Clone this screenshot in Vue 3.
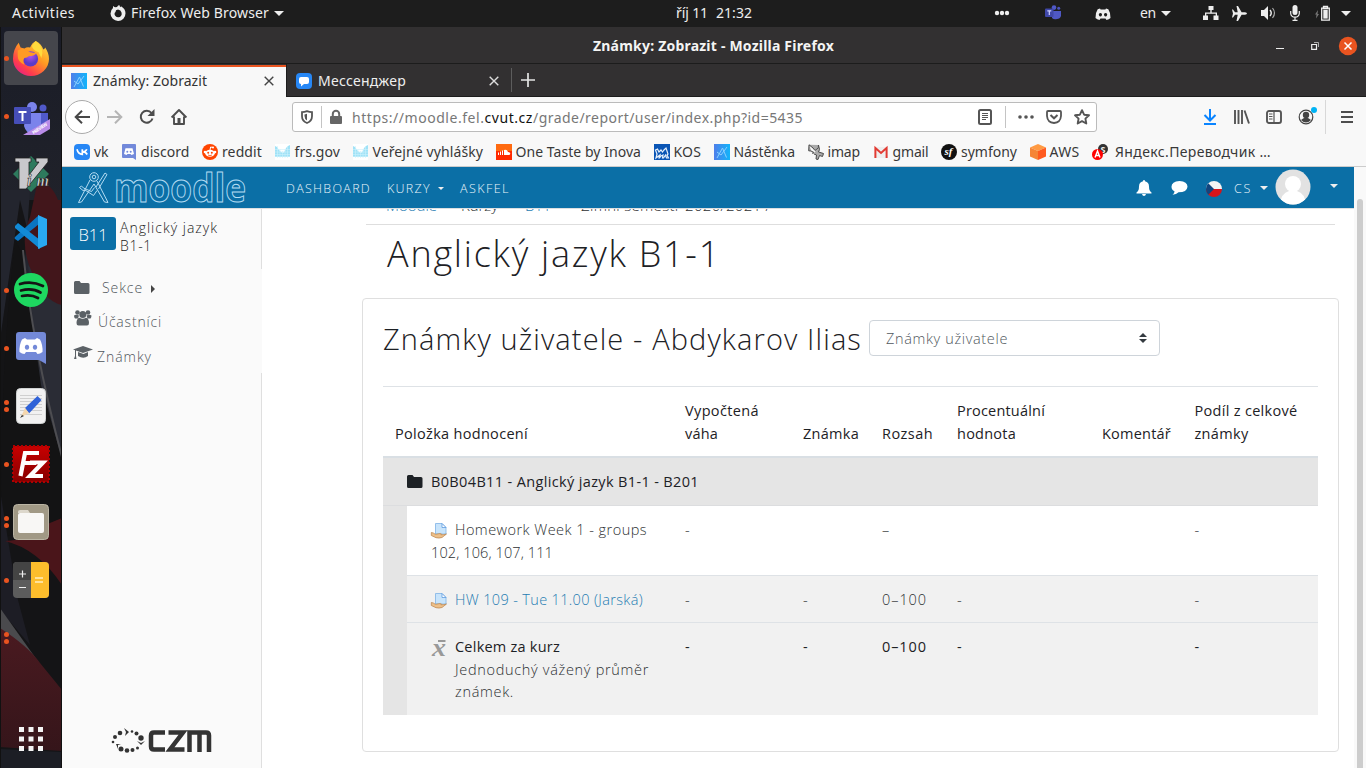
<script setup>
// Spreads letters so a label takes a known advance width.
const vFit = {
  mounted(el, { value }) {
    const count = el.textContent.length
    const natural = el.getBoundingClientRect().width
    el.style.letterSpacing = (value - natural) / count + 'px'
  }
}

const bookmarks = [
  { icon: 'vk', label: 'vk', w: 14.5 },
  { icon: 'discord', label: 'discord', w: 48.5 },
  { icon: 'reddit', label: 'reddit', w: 40 },
  { icon: 'gov', label: 'frs.gov', w: 45.5 },
  { icon: 'gov', label: 'Veřejné vyhlášky', w: 110.5 },
  { icon: 'cloud', label: 'One Taste by Inova', w: 125.5 },
  { icon: 'kos', label: 'KOS', w: 27.5 },
  { icon: 'moodle', label: 'Nástěnka', w: 61.5 },
  { icon: 'imap', label: 'imap', w: 32.5 },
  { icon: 'gmail', label: 'gmail', w: 36 },
  { icon: 'symfony', label: 'symfony', w: 56 },
  { icon: 'aws', label: 'AWS', w: 30 },
  { icon: 'yandex', label: 'Яндекс.Переводчик …', w: 156 }
]

const dock = [
  { name: 'firefox', dots: 1, active: true },
  { name: 'teams', dots: 1 },
  { name: 'vim', dots: 0 },
  { name: 'code', dots: 0 },
  { name: 'spotify', dots: 1 },
  { name: 'discord', dots: 1 },
  { name: 'editor', dots: 2 },
  { name: 'filezilla', dots: 1 },
  { name: 'files', dots: 2 },
  { name: 'calc', dots: 1 },
  { name: 'none', dots: 2 }
]
</script>

<template>
  <div class="desktop">
    <header class="topbar">
      <span class="activities" v-fit="63">Activities</span>
      <svg class="ff-mini" width="16" height="16" viewBox="0 0 16 16"><path fill="#eee" fill-rule="evenodd" d="M3 3q-.2-1 .3-2 1 1.200 2.200 1.300L7 2q.8-1.500 2.300-2 .2 1.500 1.400 2.300l.3-1q4.500 2.500 4.500 7A7.500 7.500 0 0 1 .5 8.500Q.5 5 3 3zM8 4.600 6 5.200 5.500 7 4.600 8A3.600 3.600 0 1 0 11.500 7.500Q11 5 8 4.600z"/></svg>
      <span v-fit="138">Firefox Web Browser</span>
      <i class="caret c1"></i>
      <span class="clock"><span v-fit="32">říj 11</span><span v-fit="36">21:32</span></span>
      <div class="tray">
        <svg width="16" height="6" class="t-dots"><g fill="#eee"><circle cx="3" cy="3" r="2.200"/><circle cx="8" cy="3" r="2.200"/><circle cx="13" cy="3" r="2.200"/></g></svg>
        <svg width="16" height="16" viewBox="0 0 16 16" class="t-teams"><circle cx="9" cy="2.6" r="2.3" fill="#5059c9"/><circle cx="13.7" cy="3.3" r="1.5" fill="#4b53bc"/><path d="M7 6h9v5q-1 3-4 3-3 1-5-1z" fill="#4f58c5"/><rect y="3.5" width="8.5" height="8.5" rx="1" fill="#4048a9"/><path d="M2.3 5.8h4M4.3 6v4" stroke="#cdd0ff" stroke-width="1.2"/></svg>
        <svg width="16" height="12" viewBox="0 0 16 12" class="t-disc"><path fill="#eee" fill-rule="evenodd" d="M5 .5 2.7 1.3Q.2 5 .5 10q1.500 1.500 4 2l1-1.500h5l1 1.500q2.500-.5 4-2 .3-5-2.200-8.700L11 .5l-.6 1H5.600zM5.400 5a1.600 1.700 0 1 0 .01 0zM10.600 5a1.600 1.700 0 1 0 .01 0z"/></svg>
        <span class="t-en" v-fit="16">en</span><i class="caret c2"></i>
        <svg width="16" height="14" viewBox="0 0 16 14" class="t-net"><path d="M5.500 0h5v4h-5zM0 9.500h5V14H0zM10.500 9.500h5V14h-5zM7.300 4h1.400v3H7.300zM2 6.500h12v3.200h-1.300V7.800H3.300v1.900H2z" fill="#eee"/></svg>
        <svg width="15" height="15" viewBox="0 0 15 15" class="t-plane"><path d="M1 3.500l2 2.700h2.700L4.500 0H6l3.600 6.300H13q2 .2 2 1.200t-2 1.200H9.600L6 15H4.500l1.200-6.200H3l-2 2.700H0l1-4-1-4z" fill="#eee"/></svg>
        <svg width="15" height="14" viewBox="0 0 15 14" class="t-vol"><path d="M0 4h3l4-4v14L3 10H0z" fill="#eee"/><path d="M9 4q2.500 3 0 6" stroke="#eee" fill="none" stroke-width="1.400"/><path d="M11.500 2q4 5 0 10" stroke="#aaa" fill="none" stroke-width="1.200"/></svg>
        <svg width="10" height="16" viewBox="0 0 10 16" class="t-mic"><rect x="2.500" width="5" height="10" rx="2.500" fill="#eee"/><path d="M.7 6v2.500q.3 3.500 4.300 3.700 4-.2 4.300-3.700V6M5 12v3.500M2.500 15.300h5" stroke="#eee" stroke-width="1.200" fill="none"/></svg>
        <svg width="15" height="15" viewBox="0 0 15 15" class="t-bat"><path d="M3 4 0 8.500h1.500l-.5 4L4 8H2.500z" fill="#777"/><path d="M6.700 2.200h7.600v12H6.700zM8.500.5h4v2h-4z" stroke="#eee" fill="none" stroke-width="1.300"/><path d="M8.300 3.800h4.400v8.800H8.300z" fill="#eee"/></svg>
        <i class="caret c3"></i>
      </div>
    </header>

    <div class="work">
      <aside class="dock">
        <svg class="wall" width="62" height="741" viewBox="0 27 62 741">
          <defs><linearGradient id="wr" x2="0" y2="1"><stop stop-color="#4a1a20"/><stop offset="1" stop-color="#35151a"/></linearGradient>
          <linearGradient id="wk" x2="0" y2="1"><stop stop-color="#1a1c27"/><stop offset="1" stop-color="#20222a"/></linearGradient></defs>
          <path fill="#141416" d="M0 27h62v741H0z"/><path fill="url(#wk)" d="M0 27h62v173H0z"/>
          <path fill="#23252e" d="M0 190h30l-6 85 14 115 24 60V300L40 280 20 200l-10 70-10 70z"/>
          <path fill="#2a2c35" d="M28 265l34 40v155l-24-78z"/>
          <path fill="#131314" d="M15 240l8 15 18 130 21 74v60L2 538q-4-150 13-298z"/>
          <path fill="#42161b" d="M38 180q14 4 20 20h4v105q-20-4-33-40-9-26 1-48z"/>
          <path d="M23 250q8 90 39 207" stroke="#4d4d51" stroke-width="2" fill="none"/>
          <path fill="#1d1d25" d="M0 490l8 50 10 60 12 45L0 610z"/>
          <path fill="#4a151a" d="M5 541q25-1 40-16l17-7v67q-24-36-57-44z"/>
          <path fill="#4a4a4d" d="M0 608l32 45 12 17L0 632z"/>
          <path fill="url(#wr)" d="M0 628q28 18 40 35l22 27v61l-62-4z"/>
          <path fill="#1c1e25" d="M0 749l62 3v16H0z"/>
          <path d="M.5 27v741M61.500 27v741" stroke="#111"/>
        </svg>
        <div v-for="d in dock" :key="d.name" class="slot" :class="{ active: d.active }">
          <div class="dots"><b v-for="n in d.dots" :key="n"></b></div>
          <svg v-if="d.name === 'firefox'" width="36" height="38" viewBox="0 0 38 38">
            <defs><linearGradient id="fa" x1="1" x2=".2" y2="1"><stop stop-color="#ffe84b"/><stop offset=".45" stop-color="#ff9a22"/><stop offset=".8" stop-color="#ff3b4d"/><stop offset="1" stop-color="#e0218a"/></linearGradient><radialGradient id="fb" cy=".3"><stop stop-color="#b552e8"/><stop offset="1" stop-color="#5b3bc8"/></radialGradient></defs>
            <path fill="url(#fa)" d="M24 1q6 3 8 9 2-1 2-2 4 6 4 12A19 18 0 0 1 0 20Q0 10 6 3l2 5 4 1q3-2 6-1 2-5 6-7z"/>
            <circle cx="18.500" cy="20" r="8" fill="url(#fb)"/>
            <path d="M5 11q5-3 8-1l5 3 7 1q-3 3-8 3-2 2-5 2-2 3 0 7-7-3-7-9z" fill="#ff9a25"/><path d="M24 1q10 8 6 18l-3-6q-7-3-7-7z" fill="#ffdb3d"/>
          </svg>
          <svg v-else-if="d.name === 'teams'" class="teams" width="38" height="36" viewBox="0 0 38 36"><circle cx="18" cy="6" r="5" fill="#7b83eb"/><circle cx="29" cy="7" r="3.500" fill="#5059c9"/><path d="M23 12h11v10q-2 7-8 6z" fill="#5059c9"/><path d="M12 12h15v12q-2 9-9 9-6-1-8-8z" fill="#7b83eb"/><rect x="0" y="6" width="17" height="17" rx="1" fill="#464eb8"/><path d="M4.500 11h8M8.500 11v9" stroke="#fff" stroke-width="2"/><path d="M9 34 36 18v10L26 34z" fill="#b98ce8"/><text transform="translate(19.500 33.500) rotate(-34)" fill="#fff" font-size="4.500" textLength="17" font-family="Open Sans" font-weight="700">PREVIEW</text></svg>
          <svg v-else-if="d.name === 'vim'" width="38" height="38" viewBox="0 0 38 38"><path d="M19 1l18 18-18 18L1 19z" fill="#2d7a5d"/><path d="M3 3h16v4h-2v13L27 7h-3V3h12v4L14 34H7V7H3z" fill="#c9c9cc" stroke="#222" stroke-width=".8"/><text x="15" y="31" font-family="Liberation Serif" font-style="italic" font-weight="700" font-size="16" textLength="22" fill="#ddd" stroke="#222" stroke-width=".6">im</text></svg>
          <svg v-else-if="d.name === 'code'" width="36" height="36" viewBox="0 0 36 36"><path d="M26 1v9L5 27l-3-2q-1-1 0-2z" fill="#0a75c2"/><path d="M2 12l3-3 22 17v9L2 14z" fill="#128ad6"/><path d="M25 1l9 4v26l-9 4z" fill="#29a9f2"/></svg>
          <svg v-else-if="d.name === 'spotify'" width="34" height="34" viewBox="0 0 34 34"><circle cx="17" cy="17" r="17" fill="#1ed760"/><path d="M6 11q12-3.500 23 2M7 17.500q11-3 19.500 2M8 23q9-2 16 2" stroke="#141414" stroke-width="2.700" stroke-linecap="round" fill="none"/></svg>
          <svg v-else-if="d.name === 'discord'" width="30" height="32" viewBox="0 0 30 32"><path d="M3 0h24q3 0 3 3v29l-7-4H3q-3 0-3-3V3q0-3 3-3z" fill="#7389d8"/><path fill="#fff" fill-rule="evenodd" d="M9 6 6 7.500Q3 13 3.500 20q2.500 2 5 2l1.500-2h10l1.500 2q2.500 0 5-2 .5-7-2.500-12.500L21 6l-2 1.500h-8zM11 12.700a2.200 2.500 0 1 0 .01 0zM19 12.700a2.200 2.500 0 1 0 .01 0z"/></svg>
          <svg v-else-if="d.name === 'editor'" width="30" height="36" viewBox="0 0 30 36"><rect x=".5" y=".5" width="29" height="35" rx="4" fill="#f1f1f1" stroke="#cfd2d2"/><path d="M4 7.500h22M4 10.500h22M4 13.500h22M4 16.500h22M4 19.500h22M4 22.500h22M4 26.500h22" stroke="#cfcfcf"/><path d="M9 20 21.500 8l4 4L13 25.500z" fill="#2f62d8"/><path d="M9 20l4 5-8 4z" fill="#f3d6ae"/><path d="M6 27l2 1-4 2z" fill="#333"/></svg>
          <svg v-else-if="d.name === 'filezilla'" width="38" height="38" viewBox="0 0 38 38"><defs><linearGradient id="fz" x2="0" y2="1"><stop stop-color="#c80000"/><stop offset="1" stop-color="#860000"/></linearGradient></defs><rect x="1" y="1" width="36" height="36" fill="url(#fz)" stroke="#b00000" stroke-width="2" stroke-dasharray="2 2"/><path d="M8.500 31 13 8h14M12 18h12M18 17.500h13L18 31h13" stroke="#fff" stroke-width="4.200" fill="none"/></svg>
          <svg v-else-if="d.name === 'files'" width="36" height="36" viewBox="0 0 36 36"><rect x=".5" y=".5" width="35" height="35" rx="4" fill="#a19985" stroke="#bbb5a4"/><path d="M5 8q0-2 2-2h8l2 3H5z" fill="#ddd8cc"/><rect x="5" y="9" width="26" height="20" rx="2" fill="#f8f7f5"/></svg>
          <svg v-else-if="d.name === 'calc'" width="36" height="36" viewBox="0 0 36 36"><rect width="36" height="36" rx="4" fill="#5c5c5c"/><path d="M0 18V4q0-4 4-4h14v18z" fill="#444"/><path d="M18 0h14q4 0 4 4v28q0 4-4 4H18z" fill="#fdbd2c"/><path d="M6 12h7M9.500 8.500v7M6 25.500h7" stroke="#eee" stroke-width="1.200"/><path d="M22 16h8M22 20h8" stroke="#ffe29a" stroke-width="2"/></svg>
        </div>
        <svg class="apps" width="24" height="24" viewBox="0 0 24 24"><path fill="#f4f4f4" d="M0 0h5v5H0zM9.500 0h5v5h-5zM19 0h5v5h-5zM0 9.500h5v5H0zM9.500 9.500h5v5h-5zM19 9.500h5v5h-5zM0 19h5v5H0zM9.500 19h5v5h-5zM19 19h5v5h-5z"/></svg>
      </aside>

      <section class="window">
        <div class="titlebar">
          <span class="title" v-fit="241">Známky: Zobrazit - Mozilla Firefox</span>
          <div class="winbtns">
            <svg width="8" height="6"><path d="M0 5.500h8" stroke="#eee"/></svg>
            <svg width="8" height="8"><path d="M.7 2.500h4.800v4.800H.7z" fill="none" stroke="#eee" stroke-width="1.200"/><path d="M3 .5h4.500V5" fill="none" stroke="#aaa"/></svg>
            <svg width="18" height="18"><circle cx="9" cy="9" r="9.200" fill="#e95420"/><path d="M5.500 5.500l7 7m0-7-7 7" stroke="#fff" stroke-width="1.500"/></svg>
          </div>
        </div>

        <div class="tabs">
          <div class="tab current">
            <svg width="16" height="16"><defs><linearGradient id="mg"><stop stop-color="#4f7fea"/><stop offset="1" stop-color="#12b4fa"/></linearGradient></defs><path fill="url(#mg)" d="M0 0h16v16H0z"/><path d="M3 14 8.500 4l4 9.500M3 8l4 3 6-8" stroke="#8ad0ff" fill="none"/></svg>
            <span v-fit="114">Známky: Zobrazit</span>
            <svg class="x" width="10" height="10"><path d="M.7.7l8.600 8.600m0-8.600L.7 9.300" stroke="#444" stroke-width="1.400"/></svg>
          </div>
          <div class="tab">
            <svg width="16" height="16"><rect width="16" height="16" rx="4" fill="#2787f5"/><path d="M5 4h6q2 0 2 2v3q0 2-2 2H8l-3 2.500V11q-2 0-2-2V6q0-2 2-2z" fill="#fff"/></svg>
            <span v-fit="88">Мессенджер</span>
            <svg class="x" width="10" height="10"><path d="M.7.7l8.600 8.600m0-8.600L.7 9.300" stroke="#ddd" stroke-width="1.400"/></svg>
          </div>
          <i class="tabsep"></i>
          <svg class="plus" width="14" height="14"><path d="M7 0v14M0 7h14" stroke="#e4e4e4" stroke-width="1.700"/></svg>
        </div>

        <div class="nav">
          <div class="back"><svg width="16" height="14"><path d="M16 7H1.500M8 .8 1.700 7 8 13.200" stroke="#484848" stroke-width="2" fill="none"/></svg></div>
          <svg class="fwd" width="16" height="14"><path d="M0 7h14.500M8 .8 14.300 7 8 13.200" stroke="#b5b5b5" stroke-width="2" fill="none"/></svg>
          <svg class="reload" width="16" height="16"><path d="M13.500 9.500a6 6 0 1 1-1-5.500" stroke="#4d4d4d" stroke-width="2" fill="none"/><path d="M15.500 0v7H8.500z" fill="#4d4d4d"/></svg>
          <svg class="home" width="16" height="16"><path d="M.6 8.500 8 1l7.400 7.500M3 7.500V15h10V7.500" stroke="#4d4d4d" stroke-width="1.900" fill="none" stroke-linejoin="round"/><path d="M6.500 9h3v5.500h-3z" fill="#4d4d4d"/></svg>
          <div class="url">
            <svg width="12" height="14" class="shield"><path d="M6 1.200q2.500 1 5 1v4Q11 11 6 13 1 11 1 6.200v-4q2.500 0 5-1z" fill="none" stroke="#555" stroke-width="1.800"/><path d="M6 3.800v6.700Q3.500 9 3.500 6V4.500z" fill="#555"/></svg>
            <i class="vsep v1"></i>
            <svg width="12" height="14" class="lock"><rect y="6" width="12" height="8" rx="1" fill="#666"/><path d="M2.800 7V4a3.200 3.200 0 0 1 6.400 0v3" stroke="#666" stroke-width="2" fill="none"/></svg>
            <span class="addr"><span v-fit="132.500">https://moodle.fel.</span><b v-fit="48.500">cvut.cz</b><span v-fit="270">/grade/report/user/index.php?id=5435</span></span>
            <svg width="14" height="16" class="reader"><rect x="1" y="1" width="12" height="14" rx="1.500" fill="none" stroke="#555" stroke-width="2"/><path d="M4 4.500h6M4 6.500h6M4 8.500h6M4 10.500h4" stroke="#555"/></svg>
            <i class="vsep v2"></i>
            <svg width="16" height="4" class="more"><g fill="#555"><circle cx="2" cy="2" r="1.800"/><circle cx="8" cy="2" r="1.800"/><circle cx="14" cy="2" r="1.800"/></g></svg>
            <svg width="16" height="14" class="pocket"><path d="M2 1h12q1 0 1 1v4q-.5 6.500-7 7-6.500-.5-7-7V2q0-1 1-1z" fill="none" stroke="#555" stroke-width="1.800"/><path d="M4.500 5 8 8.300 11.500 5" stroke="#555" stroke-width="2" fill="none"/></svg>
            <svg width="16" height="16" class="star"><path d="M8 1.200l2.100 4.500 4.900.6-3.600 3.300.9 4.900L8 12.100l-4.300 2.400.9-4.900L1 6.300l4.900-.6z" fill="none" stroke="#555" stroke-width="1.900" stroke-linejoin="round"/></svg>
          </div>
          <svg width="14" height="16" class="down"><path d="M7 0v11M1.500 6 7 11.500 12.500 6M1 15h12" stroke="#0a84ff" stroke-width="2" fill="none"/></svg>
          <svg width="16" height="14" class="lib"><path d="M1 0v14M4.500 0v14M8 0v14M10.500.5l4.500 13" stroke="#555" stroke-width="1.900" fill="none"/></svg>
          <svg width="16" height="14" class="side"><rect x="1" y="1" width="14" height="12" rx="2" fill="none" stroke="#555" stroke-width="1.900"/><path d="M8 1v12M3 4h3.500M3 6.500h3.500M3 9h3.500" stroke="#555" stroke-width="1.200"/></svg>
          <svg width="20" height="20" class="acct"><circle cx="8" cy="11" r="6.800" fill="none" stroke="#444" stroke-width="1.200"/><circle cx="8" cy="9" r="3.200" fill="#444"/><path d="M3 14q5-5 10 0-5 5-10 0z" fill="#444"/><circle cx="16" cy="4" r="3" fill="#00b3f4"/></svg>
          <i class="vsep v3"></i>
          <svg width="12" height="12" class="burger"><path d="M0 1h12M0 6h12M0 11h12" stroke="#4d4d4d" stroke-width="2"/></svg>
        </div>

        <div class="bookmarks">
          <div v-for="b in bookmarks" :key="b.label" class="bm" :class="b.icon">
            <svg width="16" height="16" viewBox="0 0 16 16">
              <template v-if="b.icon === 'vk'"><rect width="16" height="16" rx="4" fill="#2787f5"/><path d="M3 5.300q1.200 5 5.300 5V5.300M12.800 5.300q-1 2.500-4 2.500 3 0 4.400 2.700" stroke="#fff" stroke-width="1.700" fill="none"/></template>
              <template v-else-if="b.icon === 'discord'"><path d="M2 0h12q1 0 1 1v15l-3-2H2q-1 0-1-1V1q0-1 1-1z" fill="#7289da"/><path d="M4.500 4.300h7L13 10l-2.500 1-1-1h-3l-1 1L3 10z" fill="#fff"/><circle cx="6.300" cy="7.800" r="1" fill="#7289da"/><circle cx="9.700" cy="7.800" r="1" fill="#7289da"/></template>
              <template v-else-if="b.icon === 'reddit'"><circle cx="8" cy="8" r="8" fill="#ff4500"/><ellipse cx="8" cy="9.300" rx="4.800" ry="3.500" fill="#fff"/><circle cx="3" cy="8" r="1.300" fill="#fff"/><circle cx="13" cy="8" r="1.300" fill="#fff"/><circle cx="11" cy="3.500" r="1" fill="#fff"/><path d="M8 6l.6-3 2.400.5" stroke="#fff" fill="none"/><circle cx="6.200" cy="8.700" r="1" fill="#ff4500"/><circle cx="9.800" cy="8.700" r="1" fill="#ff4500"/><path d="M6 11q2 1.200 4 0" stroke="#ff4500" fill="none" stroke-width=".8"/></template>
              <template v-else-if="b.icon === 'gov'"><path d="M0 0h15v16H0z" fill="#fff"/><path d="M0 2l2 1 2 3 2 2 2 1 2-2 1-3 2-2 2-1v12H0z" fill="#9fe2f7"/><path d="M2.500 2v12M5 5v9M7.500 7v7M10 5v9M12.500 2v12M0 5.500h15M0 8h15M0 10.500h15M0 12.500h15" stroke="#cdf1fb" stroke-width=".6"/></template>
              <template v-else-if="b.icon === 'cloud'"><path d="M0 0h16v16H0z" fill="#ff2a00"/><path d="M0 0h16v7H0z" fill="#ff6a10"/><path d="M2.500 8.500V11M4.500 7.500V11M6.500 6.500V11" stroke="#fff" stroke-width="1"/><path d="M8 11V6q3-1 4 2 2.300 0 2.300 1.500T12.500 11z" fill="#fff"/></template>
              <template v-else-if="b.icon === 'kos'"><path d="M0 0h16v16H0z" fill="#0a55b5"/><path d="M2 14l1-4-1.500-4 2-1 1.500 3 2-2 1.500 2L10 6l2-2 1 3 1 3-1 1 1.500 3h-2l-1-3-2 3h-1l.5-3-2 1-1.500 2H5l1-3z" fill="none" stroke="#e6f0fb" stroke-width="1.200"/></template>
              <template v-else-if="b.icon === 'moodle'"><path fill="url(#mg)" d="M0 0h16v16H0z"/><path d="M3 14 8.500 4l4 9.500M3 8l4 3 6-8" stroke="#8ad0ff" fill="none"/></template>
              <template v-else-if="b.icon === 'imap'"><path d="M1 .8 5 4l2 2.500 3-2.500.5-3M1 .8l-.3 6L3 7l3 1.500L4.500 10M10.500 1l1 4.500L10.500 8l5 1.500-1 3-3-1L10 15.500 8 15l.5-4-2.500-1" fill="#aaa" stroke="#4a4a4a"/></template>
              <template v-else-if="b.icon === 'gmail'"><path d="M1.500 3h13v11h-13z" fill="#eee"/><path d="M2.400 14V4L8 9l5.600-5v10" stroke="#e23b33" stroke-width="2" fill="none"/></template>
              <template v-else-if="b.icon === 'symfony'"><circle cx="8" cy="8" r="8" fill="#111"/><text x="3.500" y="11" font-family="Liberation Serif" font-style="italic" font-weight="700" font-size="11" fill="#fff">sf</text></template>
              <template v-else-if="b.icon === 'aws'"><path d="M8 0l8 3.500L8 7 0 3.500z" fill="#ff9a42"/><path d="M0 3.500 8 7v9l-8-3.500z" fill="#f58536"/><path d="M16 3.500 8 7v9l8-3.500z" fill="#ff5a1f"/></template>
              <template v-else><circle cx="11" cy="5" r="5" fill="#333"/><text x="8.500" y="8.500" font-size="9" font-family="Open Sans" font-weight="700" fill="#eee">S</text><circle cx="5.500" cy="10.500" r="5.500" fill="#f00"/><path d="M3 13.500 5.500 7 8 13.500M4 11.500h3" stroke="#fff" stroke-width="1.400" fill="none"/></template>
            </svg>
            <span v-fit="b.w">{{ b.label }}</span>
          </div>
        </div>

        <div class="page">
          <div class="left">
          <nav class="mnav">
            <svg class="logo" width="172" height="36" viewBox="0 0 172 36"><g fill="none" stroke="#b4dcf3" stroke-width="1"><circle cx="17" cy="6" r="4.300"/><circle cx="17" cy="6" r="1.800"/><path d="M13 9 1.500 31.500l3-.5L17 13l10.500 18 3.500.5L20 10M19 16 28 2l2 1.500-8.500 14.500M20 19.500l-3.500 5L8 19l-2 .5-3.500-3 2-1.500 2 2 8 3.500 3-4"/></g>
            <text x="37" y="31" textLength="132" lengthAdjust="spacingAndGlyphs" font-family="Open Sans" font-weight="700" font-size="39" fill="none" stroke="#b4dcf3" stroke-width="1">moodle</text></svg>
            <span class="m1" v-fit="85">DASHBOARD</span>
            <span class="m2" v-fit="44">KURZY</span><i class="caret sm"></i>
            <span class="m3" v-fit="50">ASKFEL</span>
            <div class="mright">
              <svg class="bell" width="16" height="16"><path d="M8 0q1 0 1 1.300 4 1 4 5.200 0 4.500 2.500 6V13.500H.5v-1Q3 11 3 6.500 3 2.300 7 1.300 7 0 8 0zM6 14h4q-.5 2-2 2t-2-2z" fill="#fff"/></svg>
              <svg class="chat" width="17" height="14"><path d="M8.500 0q8 .5 8 5.700-.5 5.500-9 5.500-2 2.300-6 2.500 2-1.500 2-3.500Q.5 8.700.5 5.700.5.500 8.500 0z" fill="#fff"/></svg>
              <svg class="flag" width="16" height="16"><clipPath id="fc"><circle cx="8" cy="8" r="8"/></clipPath><g clip-path="url(#fc)"><path d="M0 0h16v8H0z" fill="#f4f4f4"/><path d="M0 8h16v8H0z" fill="#d7141a"/><path d="M0 0l8 8-8 8z" fill="#11457e"/></g></svg>
              <span class="cs" v-fit="18">CS</span><i class="caret md"></i>
              <svg class="avatar" width="36" height="36"><clipPath id="ac"><circle cx="18" cy="18" r="17.500"/></clipPath><g clip-path="url(#ac)"><path fill="#e2e2e2" d="M0 0h36v36H0z"/><circle cx="18" cy="15" r="8" fill="#fff"/><path d="M5 36q1-12 9-14h8q8 2 9 14z" fill="#fff"/></g></svg>
              <i class="caret md end"></i>
            </div>
          </nav>
          <div class="body">
            <aside class="drawer">
              <div class="course"><div class="badge"><span v-fit="29">B11</span></div><div class="cname"><span v-fit="98">Anglický jazyk</span><br><span v-fit="32">B1-1</span></div></div>
              <div class="item i1"><svg width="16" height="14"><path d="M1.500 0h4L7 2h7q1.500 0 1.500 1.500v8q0 1.500-1.500 1.500H1.500Q0 13 0 11.500v-10Q0 0 1.500 0z" fill="#5b6166"/></svg><span v-fit="41">Sekce</span><i class="tri"></i></div>
              <div class="item i2"><svg width="18" height="16"><g fill="#5b6166"><circle cx="3.500" cy="2.500" r="2.300"/><circle cx="14" cy="2.500" r="2.300"/><circle cx="8.800" cy="4.500" r="3.500"/><path d="M0 5.500q2-1.500 5 0l-1 3H1q-1-1-1-3zM12.500 5.500q3-1.500 5 0 0 2-1 3h-3zM2.500 13Q2.500 8.500 5.500 7.800q3 2 6.500 0 3 .7 3 5.200 0 2.500-2 2.500H4.500q-2 0-2-2.500z"/></g></svg><span v-fit="64">Účastníci</span></div>
              <div class="item i3"><svg width="20" height="16"><g fill="#5b6166"><path d="M10 1l10 3.500L10 8 0 4.500z"/><path d="M5 7l5.500 2L15 7v4q-4.500 3.500-10 0zM2 5v6l-1 3h2.500L3 11V5z"/></g></svg><span v-fit="55">Známky</span></div>
              <svg class="czm" width="102" height="26" viewBox="0 0 102 26"><g fill="#333"><circle cx="4" cy="9" r="2"/><circle cx="9" cy="5" r="2.300"/><circle cx="2" cy="14" r="1.300"/><circle cx="21" cy="3.500" r="1.300"/><circle cx="25.500" cy="5.500" r="2"/><circle cx="30" cy="10" r="2.700"/><circle cx="10" cy="21" r="2.500"/><circle cx="16" cy="22.500" r="2.300"/><circle cx="21.500" cy="22" r="2"/><circle cx="26.500" cy="20" r="1.500"/><path d="M13 0l5 4-4 4 1-4zM26 13l4 2 4-2-4 4zM5 16h5l-3 1v4z"/></g>
              <path d="M54 4.500H43q-3 0-3 3v11q0 3 3 3h11M57.500 4.500H72L59 21.500h14.500M78.500 24V4.500H95q3 0 3 3V24M88.500 4.500V24" fill="none" stroke="#333" stroke-width="4.500"/></svg>
              <i class="edge e1"></i><i class="edge e2"></i>
            </aside>
            <main>
              <div class="crumbs"><a v-fit="51">Moodle</a><span class="k" v-fit="37">Kurzy</span><a class="b" v-fit="26">B11</a><span class="z" v-fit="190">Zimní semestr 2020/2021 /</span></div>
              <h1><span v-fit="334">Anglický jazyk B1-1</span></h1>
              <div class="card">
                <div class="head"><h2><span v-fit="479">Známky uživatele - Abdykarov Ilias</span></h2>
                  <div class="select"><span v-fit="122">Známky uživatele</span><svg width="8" height="10"><path d="M4 0l4 4H0zM4 10L0 6h8z" fill="#343a40"/></svg></div></div>
                <div class="table">
                  <div class="row th">
                    <div><span v-fit="133">Položka hodnocení</span></div>
                    <div><span v-fit="74">Vypočtená</span><br><span v-fit="33">váha</span></div>
                    <div><span v-fit="56">Známka</span></div>
                    <div><span v-fit="51">Rozsah</span></div>
                    <div><span v-fit="88">Procentuální</span><br><span v-fit="59">hodnota</span></div>
                    <div><span v-fit="69">Komentář</span></div>
                    <div><span v-fit="103">Podíl z celkové</span><br><span v-fit="54">známky</span></div>
                  </div>
                  <div class="cat"><svg width="16" height="14"><path d="M1.500 0h4L7 2h7q1.500 0 1.500 1.500v8q0 1.500-1.500 1.500H1.500Q0 13 0 11.500v-10Q0 0 1.500 0z" fill="#1d2125"/></svg><span v-fit="268">B0B04B11 - Anglický jazyk B1-1 - B201</span></div>
                  <div class="group">
                    <div class="row r1">
                      <div class="name"><svg width="16" height="16"><path d="M4.500.500H11l4 4V11H4.500z" fill="#c8e4fb" stroke="#7fb2e6" stroke-width=".8"/><path d="M11 .5v4h4z" fill="#fff" stroke="#5d9be0" stroke-width=".8"/><path d="M.3 9.500q2 0 4 1.800l5-.8q2 .2.500 1.300 3 0 5.700-.8l-4.500 3.500q-3 1-6 .2L.3 12.500z" fill="#edc08a" stroke="#b9834a" stroke-width=".7"/></svg><span v-fit="192">Homework Week 1 - groups</span><br><span v-fit="122">102, 106, 107, 111</span></div>
                      <div>-</div><div></div><div>–</div><div></div><div></div><div>-</div>
                    </div>
                    <div class="row r2">
                      <div class="name"><svg width="16" height="16"><path d="M4.500.500H11l4 4V11H4.500z" fill="#c8e4fb" stroke="#7fb2e6" stroke-width=".8"/><path d="M11 .5v4h4z" fill="#fff" stroke="#5d9be0" stroke-width=".8"/><path d="M.3 9.500q2 0 4 1.800l5-.8q2 .2.500 1.300 3 0 5.700-.8l-4.500 3.500q-3 1-6 .2L.3 12.500z" fill="#edc08a" stroke="#b9834a" stroke-width=".7"/></svg><a v-fit="188">HW 109 - Tue 11.00 (Jarská)</a></div>
                      <div>-</div><div>-</div><div><span v-fit="45">0–100</span></div><div>-</div><div></div><div>-</div>
                    </div>
                    <div class="row r3">
                      <div class="name mean"><svg width="16" height="18"><text x="1" y="16" font-family="Liberation Serif" font-style="italic" font-weight="700" font-size="25" textLength="14" lengthAdjust="spacingAndGlyphs" fill="#999">x</text><path d="M7 1h7.500" stroke="#999" stroke-width="2"/></svg><div><span class="strong" v-fit="105">Celkem za kurz</span><br><span v-fit="194">Jednoduchý vážený průměr</span><br><span v-fit="59">známek.</span></div></div>
                      <div class="strong">-</div><div class="strong">-</div><div class="strong"><span v-fit="45">0–100</span></div><div class="strong">-</div><div></div><div class="strong">-</div>
                    </div>
                  </div>
                </div>
              </div>
            </main>
          </div>
          </div>
          <div class="scroll"><i></i></div>
        </div>
      </section>
    </div>
  </div>
</template>

<style>
html, body { margin: 0; overflow: hidden; }
</style>

<style scoped>
* { box-sizing: border-box; }
.desktop { width: 1366px; height: 768px; overflow: hidden; font: 14px/18px "Noto Sans", sans-serif; color: #eee; }
svg { display: block; flex: none; overflow: visible; }
span, a, b { display: inline-block; white-space: pre; flex: none; }
i { display: block; flex: none; }
.topbar { height: 27px; background: #1d1d1d; display: flex; align-items: center; padding-bottom: 1px; position: relative; }
.activities { margin-left: 12px; }
.ff-mini { margin: 0 5px 0 35px; }
.caret { width: 0; height: 0; border: 5px solid transparent; border-top-color: #eee; border-bottom: 0; }
.c1 { margin: 1px 0 0 5px; }
.clock { position: absolute; left: 676px; display: flex; gap: 8px; }
.tray { margin-left: auto; display: flex; align-items: center; padding-right: 15px; }
.t-dots { margin-right: 1px; }
.t-teams { margin-left: 34px; }
.t-disc { margin: 2px 0 0 34px; }
.t-en { margin-left: 29px; }
.c2 { margin: 1px 0 0 5px; }
.t-net { margin-left: 32px; }
.t-plane { margin-left: 13px; }
.t-vol { margin-left: 14px; }
.t-mic { margin-left: 14px; }
.t-bat { margin-left: 15px; }
.c3 { margin: 1px 0 0 11px; }
.work { display: flex; height: 741px; }
.dock { width: 62px; position: relative; padding-top: 2px; background: #141416; }
.wall { position: absolute; left: 0; top: 0; }
.slot { position: relative; height: 58px; display: flex; align-items: center; justify-content: center; }
.slot.active::before { content: ""; position: absolute; left: 4px; top: 2px; width: 54px; height: 54px; border-radius: 4px; background: #45464c; }
.slot > svg { position: relative; }
.slot > .teams { top: 3px; left: 2px; }
.dots { position: absolute; left: 4px; top: 0; height: 58px; display: flex; flex-direction: column; justify-content: center; gap: 2px; z-index: 1; }
.dots b { width: 5px; height: 5px; border-radius: 50%; background: #e95420; }
.apps { position: relative; margin: 60px 0 0 19px; }
.window { flex: 1; min-width: 0; display: flex; flex-direction: column; background: #fff; }
.titlebar { height: 36px; background: #323031; display: flex; align-items: center; padding: 1px 0 0 531px; }
.title { font-weight: 700; color: #f4f4f4; }
.winbtns { margin-left: auto; display: flex; align-items: center; padding-right: 9px; }
.winbtns svg:nth-child(1) { margin-right: 1px; }
.winbtns svg:nth-child(2) { margin-left: 26px; }
.winbtns svg:nth-child(3) { margin-left: 20px; }
.tabs { height: 34px; background: #323031; border-top: 1px solid #1c1c1c; border-bottom: 1px solid #1c1c1c; display: flex; align-items: center; }
.tab { width: 225px; height: 32px; display: flex; align-items: center; padding: 2px 12px 0 9px; gap: 6px; }
.tab.current { width: 224px; height: 32px; margin-bottom: -2px; padding: 0 12px 3px 9px; background: #f8f8f8; border-top: 2px solid #e95420; color: #333; position: relative; }
.tab:nth-child(2) { width: 225px; border-left: 1px solid #1c1c1c; }
.tab .x { margin-left: auto; }
.tabsep { width: 1px; height: 24px; background: #5d5d5d; }
.plus { margin-left: 9px; }
.nav { height: 40px; background: #f8f8f8; display: flex; align-items: center; padding-left: 3px; }
.back { width: 34px; height: 34px; border: 1px solid #aaa; border-radius: 50%; background: #fff; display: flex; align-items: center; justify-content: center; }
.fwd { margin-left: 8px; }
.reload, .home { margin-left: 16px; }
.url { width: 805px; height: 30px; margin-left: 105px; background: #fff; border: 1px solid #bbb; border-radius: 3px; display: flex; align-items: center; }
.shield { margin-left: 8px; }
.vsep { width: 1px; height: 22px; background: #c4c4c4; }
.v1 { margin-left: 8px; }
.lock { margin-left: 8px; }
.addr { margin: 1px 0 0 10px; color: #777; }
.addr b { font-weight: 400; color: #111; }
.reader { margin-left: auto; }
.v2 { margin-left: 13px; }
.more { margin-left: 12px; }
.pocket { margin-left: 12px; }
.star { margin: 0 6px 0 12px; }
.down { margin-left: 106px; }
.lib { margin-left: 17px; }
.side { margin-left: 16px; }
.acct { margin-left: 16px; margin-top: -3px; }
.v3 { height: 34px; margin-left: 7px; background: #d8d8d8; }
.burger { margin-left: 15px; }
.bookmarks { height: 30px; background: #f8f8f8; border-bottom: 1px solid #ccc; display: flex; align-items: center; padding-left: 12px; gap: 12.500px; color: #383838; }
.bm { display: flex; align-items: center; gap: 4px; }
.bm.yandex { gap: 7px; }
.page { flex: 1; display: flex; min-height: 0; font: 340 15px/22.500px "Open Sans", sans-serif; color: #2d3032; }
.left { width: 1292px; display: flex; flex-direction: column; }
.scroll { flex: 1; background: #f9f9f9; padding: 32px 0 0 3px; }
.scroll i { width: 6px; height: 569px; border-radius: 3px 3px 0 0; background: #cdcdcd; }
.mnav { height: 41px; background: #0b6fa6; display: flex; align-items: center; color: #e9f4fa; font-size: 12.500px; position: relative; z-index: 2; box-shadow: 0 1px 0 #dcdfe1; }
.logo { margin: 2px 0 0 15px; }
.m1 { margin: 3px 0 0 37px; }
.m2 { margin: 3px 0 0 16px; }
.sm { border-width: 3px; border-bottom: 0; margin: 2px 0 0 7px; }
.m3 { margin: 3px 0 0 16px; }
.mright { margin-left: auto; display: flex; align-items: center; padding-right: 16px; }
.bell { margin-right: 1px; }
.chat { margin-left: 18px; }
.flag { margin: 3px 0 0 18px; }
.cs { margin: 3px 0 0 12px; }
.md { border-width: 4px; border-bottom: 0; margin: 0 0 0 8px; }
.avatar { margin: -1px 0 0 7px; }
.end { margin: -3px 0 0 19px; }
.body { flex: 1; min-height: 0; display: flex; }
.drawer { width: 200px; background: #fafafa; position: relative; padding: 9px 0 0 8px; }
.edge { position: absolute; right: 0; width: 1px; background: #dfdfdf; }
.e1 { top: 0; height: 61px; }
.e2 { top: 165px; bottom: 0; }
.course { display: flex; gap: 4px; height: 38px; }
.badge { width: 46px; height: 33px; border-radius: 3px; background: #0b6fa6; color: #fff; display: flex; align-items: center; justify-content: center; font-size: 16.500px; padding-top: 3px; }
.cname { line-height: 18px; font-size: 14px; padding-top: 2px; color: #1c1c1c; }
.cname span, .crumbs > * { vertical-align: top; }
.item { display: flex; color: #50565b; height: 22px; align-items: center; font-size: 14px; }
.i1 { margin: 22px 0 0 4px; gap: 12px; }
.i1 svg { margin-top: -1px; }
.tri { width: 0; height: 0; border: 4px solid transparent; border-left: 4px solid #444; border-right: 0; margin: 2px 0 0 -4px; }
.i2 { margin: 12px 0 0 4px; gap: 6px; }
.i3 { margin: 13px 0 0 3px; gap: 4px; }
.i2 svg, .i3 svg { margin-top: -9px; }
.czm { position: absolute; left: 49px; bottom: 14px; }
main { flex: 1; min-width: 0; padding-left: 100px; }
.crumbs { height: 17px; margin: 0 19px 0 4px; border-bottom: 1px solid #dedede; display: flex; align-items: flex-end; padding: 0 0 8px 20px; }
a { color: #1f7cb1; }
.k { margin-left: 24px; }
.b { margin-left: 27px; }
.z { margin-left: 30px; }
h1 { margin: 7px 0 0 25px; font-size: 36px; line-height: 43px; font-weight: 320; color: #1d2125; }
.card { width: 977px; height: 454px; margin-top: 23px; border: 1px solid #dfdfdf; border-radius: 4px; padding: 21px 20px 0; }
.head { display: flex; height: 67px; }
h2 { margin: 1px 0 0; font-size: 29px; line-height: 36px; font-weight: 330; color: #1d2125; }
.select { margin-left: 7px; width: 291px; height: 36px; border: 1px solid #ced4da; border-radius: 4px; display: flex; align-items: center; justify-content: space-between; padding: 2px 12px 0 16px; color: #50575d; font-size: 14.500px; }
.select svg { margin-top: -3px; }
.table { border-top: 1px solid #dee2e6; width: 935px; margin-top: -1px; }
.row { display: grid; grid-template-columns: 290px 118px 79px 75px 145px 92px 136px; }
.row > div { padding: 13px 0 11px 12px; }
.row > div:last-child { padding-left: 12.500px; }
.row span, .row a, .cat span { vertical-align: top; }
.th { align-items: end; border-bottom: 2px solid #d9dfe4; height: 71px; font-weight: 400; color: #1d2125; font-size: 14.500px; }
.cat { height: 48px; background: #e5e5e5; border-bottom: 1px solid #dcdddf; display: flex; align-items: center; gap: 8px; padding: 2px 0 0 24px; font-size: 14.500px; font-weight: 400; color: #1d2125; }
.cat svg { margin-top: -2px; }
.group { border-left: 24px solid #e5e5e5; font-size: 14.500px; }
.group .row { grid-template-columns: 266px 118px 79px 75px 145px 92px 136px; }
.group .name { padding-left: 24px; }
.name > svg { display: inline-block; vertical-align: top; margin: 4px 8px 0 0; }
.r1 { height: 69px; }
.r2 { height: 47px; background: #f1f1f1; border-top: 1px solid #dee2e6; }
.r3 { height: 92.500px; background: #f1f1f1; border-top: 1px solid #dee2e6; }
.mean { display: flex; }
.strong { font-weight: 400; font-size: 14.500px; color: #1d2125; }
</style>
